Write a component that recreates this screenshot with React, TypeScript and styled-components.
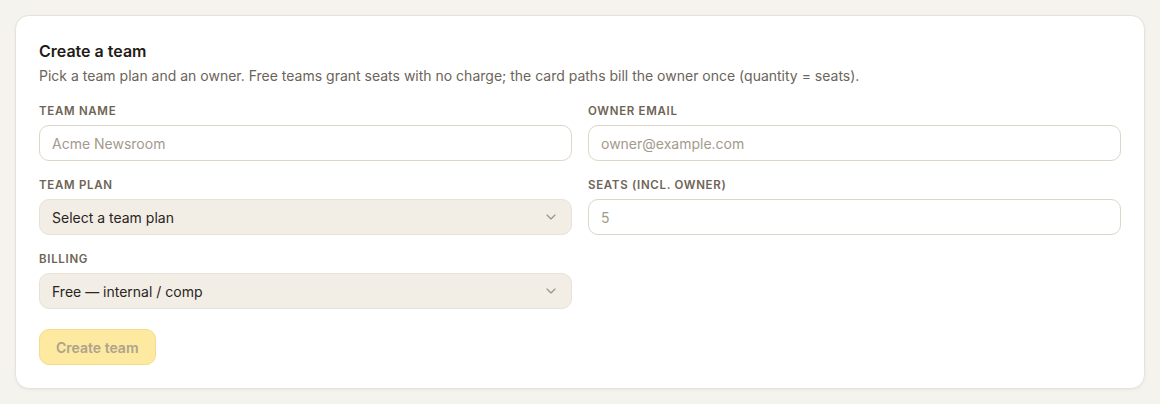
import { createGlobalStyle, styled } from "styled-components";

const GlobalStyle = createGlobalStyle`
  html, body {
    margin: 0;
    background: #f5f3ee;
  }
  body {
    padding: 15px;
    font-family: Inter, "Noto Sans", "Liberation Sans", sans-serif;
    color: #1f1c17;
  }
  * { box-sizing: border-box; }
`;

const Card = styled.form`
  background: #ffffff;
  border: 1px solid #e8e3d9;
  border-radius: 14px;
  padding: 23px;
  box-shadow: 0 1px 3px rgba(60, 50, 30, 0.06);
`;

const Title = styled.h2`
  margin: 0;
  font-size: 16px;
  line-height: 24px;
  font-weight: 600;
  color: #1f1c17;
`;

const Subtitle = styled.p`
  margin: 3px 0 0;
  font-size: 14px;
  line-height: 20px;
  color: #6b6459;
`;

const Grid = styled.div`
  margin-top: 17px;
  display: grid;
  grid-template-columns: 1fr 1fr;
  column-gap: 16px;
  row-gap: 16px;
`;

const Field = styled.div`
  display: flex;
  flex-direction: column;
  gap: 6px;
`;

const Label = styled.label`
  font-size: 11.5px;
  line-height: 16px;
  font-weight: 600;
  letter-spacing: 0.06em;
  text-transform: uppercase;
  color: #6e6455;
`;

const Input = styled.input`
  height: 36px;
  width: 100%;
  border: 1px solid #ddd5c8;
  border-radius: 10px;
  background: #fff;
  padding: 0 12px;
  font-family: inherit;
  font-size: 14px;
  color: #2a251e;
  outline: none;
  &::placeholder { color: #a39a8c; }
`;

const SelectBox = styled.div`
  height: 36px;
  border: 1px solid #e8e2d6;
  border-radius: 10px;
  background: #f2eee6;
  display: flex;
  align-items: center;
  justify-content: space-between;
  padding: 0 12px;
  font-size: 14px;
  color: #2a251e;
`;

const Chevron = styled.svg`
  width: 16px;
  height: 16px;
  color: #9a917f;
`;

const Actions = styled.div`
  margin-top: 20px;
  display: flex;
`;

const Button = styled.button`
  height: 36px;
  padding: 0 16px;
  border-radius: 10px;
  border: 1px solid #f6dc8a;
  background: #fde9a0;
  color: #ada38c;
  font-family: inherit;
  font-size: 14px;
  font-weight: 600;
  cursor: not-allowed;
`;

function Select({ value }: { value: string }) {
  return (
    <SelectBox>
      <span>{value}</span>
      <Chevron viewBox="0 0 24 24" fill="none" stroke="currentColor" strokeWidth={1.75} strokeLinecap="round" strokeLinejoin="round">
        <path d="m6 9 6 6 6-6" />
      </Chevron>
    </SelectBox>
  );
}

export default function App() {
  return (
    <>
      <GlobalStyle />
      <Card onSubmit={(e) => e.preventDefault()}>
        <Title>Create a team</Title>
        <Subtitle>
          Pick a team plan and an owner. Free teams grant seats with no charge; the card paths bill the owner once (quantity = seats).
        </Subtitle>
        <Grid>
          <Field>
            <Label>Team name</Label>
            <Input placeholder="Acme Newsroom" />
          </Field>
          <Field>
            <Label>Owner email</Label>
            <Input placeholder="owner@example.com" />
          </Field>
          <Field>
            <Label>Team plan</Label>
            <Select value="Select a team plan" />
          </Field>
          <Field>
            <Label>Seats (incl. owner)</Label>
            <Input placeholder="5" />
          </Field>
          <Field>
            <Label>Billing</Label>
            <Select value="Free — internal / comp" />
          </Field>
        </Grid>
        <Actions>
          <Button type="submit" disabled>Create team</Button>
        </Actions>
      </Card>
    </>
  );
}
